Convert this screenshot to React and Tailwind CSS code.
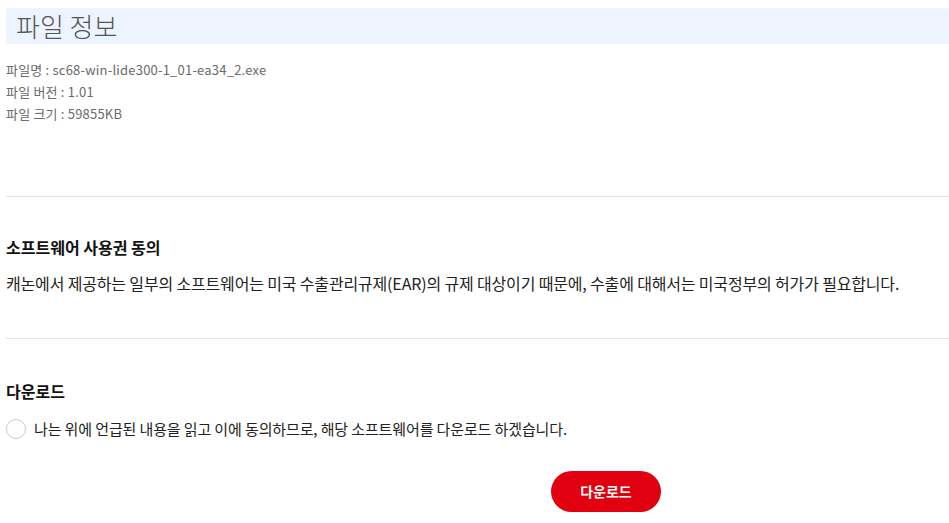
import React, { useState } from 'react';

const font = { fontFamily: '"Noto Sans CJK KR", "Noto Sans", sans-serif' };

const FileDownload = () => {
    const [agreed, setAgreed] = useState(false);

    const fileInfo = [
        '파일명 : sc68-win-lide300-1_01-ea34_2.exe',
        '파일 버전 : 1.01',
        '파일 크기 : 59855KB',
    ];

    return (
        <div className="min-h-screen bg-white overflow-hidden" style={font}>
            <div className="w-[1200px] ml-[6px] pt-[8px]">
                {/* File info */}
                <div className="bg-[#eef4ff] h-[36px] flex items-center pl-[10px]">
                    <h2 className="text-[26px] text-[#555] font-light leading-none">파일 정보</h2>
                </div>
                <div className="mt-[15px] text-[13px] tracking-[0.2px] leading-[22px] text-[#6a6a6a]">
                    {fileInfo.map((line, i) => (
                        <p key={i}>{line}</p>
                    ))}
                </div>

                <div className="mt-[71px] border-t border-[#e5e5e5]"></div>

                {/* License */}
                <div className="pt-[40px] pb-[44px]">
                    <h3 className="text-[16px] font-bold text-[#111] leading-[20px]">소프트웨어 사용권 동의</h3>
                    <p className="mt-[15px] text-[16px] tracking-[-0.16px] text-[#222] leading-[22px]">
                        캐논에서 제공하는 일부의 소프트웨어는 미국 수출관리규제(EAR)의 규제 대상이기 때문에, 수출에 대해서는 미국정부의 허가가 필요합니다.
                    </p>
                </div>

                <div className="border-t border-[#e5e5e5]"></div>

                {/* Download */}
                <div className="pt-[42px]">
                    <h3 className="text-[16px] font-bold text-[#111] leading-[20px]">다운로드</h3>
                    <label className="mt-[17px] flex items-center gap-[8px] cursor-pointer">
                        <span
                            onClick={() => setAgreed(!agreed)}
                            className={`w-[20px] h-[20px] rounded-full border flex-shrink-0 ${agreed ? 'border-[#e0000f] bg-[#e0000f]' : 'border-[#ccc] bg-white'}`}
                        ></span>
                        <span className="text-[15px] tracking-[-0.12px] text-[#222] leading-[22px]">
                            나는 위에 언급된 내용을 읽고 이에 동의하므로, 해당 소프트웨어를 다운로드 하겠습니다.
                        </span>
                    </label>
                    <div className="flex justify-center mt-[31px]">
                        <button className="w-[110px] h-[41px] rounded-full bg-[#e0000f] text-white text-[14px] font-bold">
                            다운로드
                        </button>
                    </div>
                </div>
            </div>
        </div>
    );
};

export default FileDownload;
